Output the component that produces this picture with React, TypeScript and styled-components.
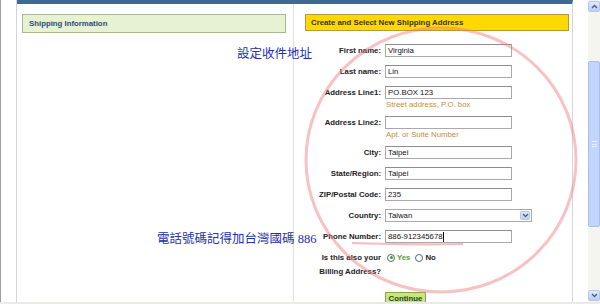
import styled, { createGlobalStyle } from "styled-components";

const GlobalStyle = createGlobalStyle`
  html, body {
    margin: 0;
    padding: 0;
    width: 600px;
    height: 304px;
    overflow: hidden;
    background: #fff;
  }
  body {
    font-family: "Liberation Sans", Arial, sans-serif;
    font-size: 7.8px;
    color: #222;
  }
  * { box-sizing: border-box; }
`;

const fields: { label: string; value: string; hint?: string }[] = [
  { label: "First name:", value: "Virginia" },
  { label: "Last name:", value: "Lin" },
  { label: "Address Line1:", value: "PO.BOX 123", hint: "Street address, P.O. box" },
  { label: "Address Line2:", value: "", hint: "Apt. or Suite Number" },
  { label: "City:", value: "Taipei" },
  { label: "State/Region:", value: "Taipei" },
  { label: "ZIP/Postal Code:", value: "235" },
];

function Chevron({ up }: { up?: boolean }) {
  return (
    <svg width="7" height="5" viewBox="0 0 7 5">
      <path
        d={up ? "M1 4 L3.5 1.5 L6 4" : "M1 1 L3.5 3.5 L6 1"}
        fill="none"
        stroke="#4d6185"
        strokeWidth="1.4"
      />
    </svg>
  );
}

function App() {
  return (
    <Page>
      <GlobalStyle />
      <Top>
        <Gutter />
        <Main>
          <LeftPanel>
            <InfoBox>Shipping Information</InfoBox>
          </LeftPanel>
          <RightPanel>
            <YellowHeader>Create and Select New Shipping Address</YellowHeader>
            <Form>
              {fields.map((f) => (
                <Row key={f.label}>
                  <Label>{f.label}</Label>
                  <FieldCol>
                    <TextBox>{f.value}</TextBox>
                    {f.hint && <Hint>{f.hint}</Hint>}
                  </FieldCol>
                </Row>
              ))}
              <Row>
                <Label>Country:</Label>
                <SelectBox>
                  <span>Taiwan</span>
                  <SelectArrow>
                    <Chevron />
                  </SelectArrow>
                </SelectBox>
              </Row>
              <Row>
                <Label>Phone Number:</Label>
                <TextBox>
                  886-912345678
                  <Caret />
                </TextBox>
              </Row>
              <Row>
                <Label $tall>
                  Is this also your
                  <br />
                  Billing Address?
                </Label>
                <RadioGroup>
                  <RadioItem>
                    <Radio $checked />
                    <RadioText $green>Yes</RadioText>
                  </RadioItem>
                  <RadioItem>
                    <Radio />
                    <RadioText>No</RadioText>
                  </RadioItem>
                </RadioGroup>
              </Row>
            </Form>
            <ContinueButton>Continue</ContinueButton>
          </RightPanel>
        </Main>
        <Spacer />
        <Scrollbar>
          <ArrowButton>
            <Chevron up />
          </ArrowButton>
          <Track>
            <Thumb>
              <Grip />
            </Thumb>
          </Track>
          <ArrowButton>
            <Chevron />
          </ArrowButton>
        </Scrollbar>
      </Top>
      <BottomStrip />

      <Annotation style={{ left: 237, top: 46 }}>設定收件地址</Annotation>
      <Annotation style={{ left: 157, top: 231 }}>電話號碼記得加台灣國碼 886</Annotation>
      <Overlay width="600" height="304" viewBox="0 0 600 304">
        <ellipse
          cx="441"
          cy="160"
          rx="135"
          ry="132"
          fill="none"
          stroke="rgba(238,120,125,0.45)"
          strokeWidth="3"
        />
        <path
          d="M352 243 Q410 245 463 244"
          fill="none"
          stroke="rgba(238,120,125,0.5)"
          strokeWidth="2.2"
        />
      </Overlay>
    </Page>
  );
}

export default App;

const Page = styled.div`
  position: relative;
  width: 600px;
  height: 304px;
  display: flex;
  flex-direction: column;
`;

const Top = styled.div`
  display: flex;
  height: 302px;
`;

const Gutter = styled.div`
  width: 17px;
  border-left: 1px solid #9c9c9c;
  border-right: 1px solid #d4d4d4;
  background: #fff;
`;

const Main = styled.div`
  width: 556px;
  display: flex;
  border-top: 4px solid #3f6994;
  border-right: 1px solid #d6d6d6;
`;

const LeftPanel = styled.div`
  width: 277px;
  padding: 10px 0 0 5px;
  border-right: 1px solid #e2e2e2;
`;

const InfoBox = styled.div`
  width: 264px;
  height: 19px;
  padding-left: 6px;
  display: flex;
  align-items: center;
  background: #e6f2d2;
  border: 1px solid #aab88e;
  color: #2d4c7c;
  font-weight: bold;
`;

const RightPanel = styled.div`
  flex: 1;
  padding: 10px 3px 0 11px;
`;

const YellowHeader = styled.div`
  height: 17px;
  padding-left: 5px;
  display: flex;
  align-items: center;
  background: #ffd800;
  border: 1px solid #b39b38;
  color: #3a3418;
  font-weight: bold;
`;

const Form = styled.div`
  margin-top: 13px;
  display: flex;
  flex-direction: column;
  gap: 8px;
`;

const Row = styled.div`
  display: flex;
  align-items: flex-start;
  gap: 4px;
`;

const Label = styled.div<{ $tall?: boolean }>`
  width: 76px;
  flex-shrink: 0;
  text-align: right;
  font-weight: bold;
  color: #222;
  line-height: ${(p) => (p.$tall ? "13.5px" : "13px")};
  white-space: nowrap;
`;

const FieldCol = styled.div`
  display: flex;
  flex-direction: column;
`;

const TextBox = styled.div`
  width: 127px;
  height: 13px;
  padding: 0 2px;
  border: 1px solid #a9a9ab;
  border-top-color: #8d8d8f;
  background: #fff;
  color: #111;
  line-height: 11px;
  white-space: nowrap;
  display: flex;
  align-items: center;
`;

const Caret = styled.span`
  display: inline-block;
  width: 1px;
  height: 10px;
  background: #111;
`;

const Hint = styled.div`
  margin: 1px 0 -2px 1px;
  line-height: 10px;
  color: #c98a45;
`;

const SelectBox = styled.div`
  width: 147px;
  height: 13px;
  padding: 0 1px 0 2px;
  border: 1px solid #a9a9ab;
  background: #fff;
  color: #111;
  display: flex;
  align-items: center;
  justify-content: space-between;
  line-height: 11px;
`;

const SelectArrow = styled.div`
  width: 10px;
  height: 9px;
  display: flex;
  align-items: center;
  justify-content: center;
  background: linear-gradient(#e0e9fc, #bccff6);
  border: 1px solid #b4c6ee;
  border-radius: 2px;
`;

const RadioGroup = styled.div`
  display: flex;
  gap: 5px;
  height: 13.5px;
  align-items: center;
  margin-left: 2px;
`;

const RadioItem = styled.div`
  display: flex;
  align-items: center;
  gap: 2px;
`;

const Radio = styled.span<{ $checked?: boolean }>`
  position: relative;
  width: 8px;
  height: 8px;
  border-radius: 50%;
  border: 1px solid #55667f;
  background: #fff;
  &::after {
    content: "";
    display: ${(p) => (p.$checked ? "block" : "none")};
    position: absolute;
    left: 1.5px;
    top: 1.5px;
    width: 3px;
    height: 3px;
    border-radius: 50%;
    background: #3e9a2c;
  }
`;

const RadioText = styled.span<{ $green?: boolean }>`
  font-weight: bold;
  color: ${(p) => (p.$green ? "#5f9c36" : "#222")};
`;

const ContinueButton = styled.div`
  margin: 14px 0 0 80px;
  width: 41px;
  height: 13px;
  display: flex;
  align-items: center;
  justify-content: center;
  background: #c6e77f;
  border: 1px solid #8ea54a;
  color: #29430f;
  font-weight: bold;
`;

const Spacer = styled.div`
  width: 15px;
  background: #fff;
`;

const Scrollbar = styled.div`
  width: 12px;
  display: flex;
  flex-direction: column;
  background: #f5f5ef;
  padding: 1px 0;
`;

const ArrowButton = styled.div`
  height: 11px;
  display: flex;
  align-items: center;
  justify-content: center;
  background: linear-gradient(#e2eafc, #bccdf4);
  border: 1px solid #b6c7ee;
  border-radius: 2px;
`;

const Track = styled.div`
  flex: 1;
  padding-top: 49px;
`;

const Thumb = styled.div`
  height: 166px;
  background: #c4d5fb;
  border: 1px solid #abbfee;
  border-radius: 2px;
  display: flex;
  align-items: center;
  justify-content: center;
`;

const Grip = styled.div`
  width: 5px;
  height: 6px;
  border-top: 1px solid #e6eeff;
  border-bottom: 1px solid #e6eeff;
  background: linear-gradient(#c4d5fb 2px, #e6eeff 2px, #e6eeff 3px, #c4d5fb 3px);
`;

const BottomStrip = styled.div`
  height: 2px;
  background: #ebebe4;
`;

const Annotation = styled.div`
  position: absolute;
  font-family: "Liberation Serif", "Noto Sans CJK TC", serif;
  font-size: 12.5px;
  line-height: 16px;
  color: #2330ad;
  white-space: nowrap;
`;

const Overlay = styled.svg`
  position: absolute;
  left: 0;
  top: 0;
  pointer-events: none;
`;
